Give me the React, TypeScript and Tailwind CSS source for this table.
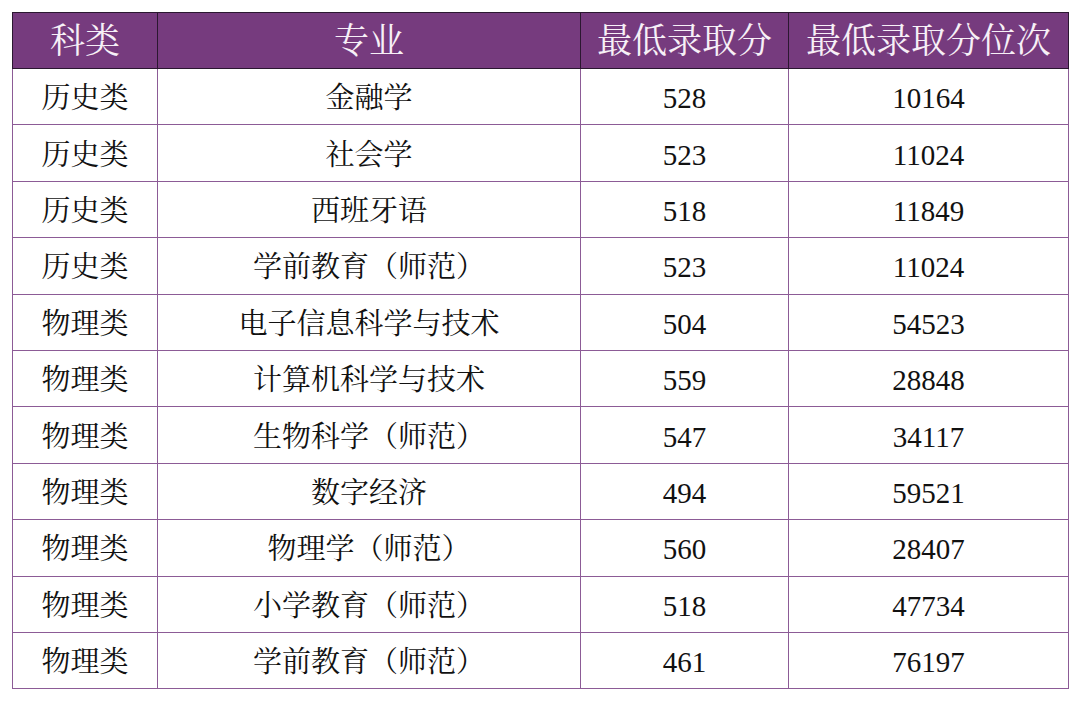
import React from "react";

const rows: [string, string, string, string][] = [
  ["历史类", "金融学", "528", "10164"],
  ["历史类", "社会学", "523", "11024"],
  ["历史类", "西班牙语", "518", "11849"],
  ["历史类", "学前教育（师范）", "523", "11024"],
  ["物理类", "电子信息科学与技术", "504", "54523"],
  ["物理类", "计算机科学与技术", "559", "28848"],
  ["物理类", "生物科学（师范）", "547", "34117"],
  ["物理类", "数字经济", "494", "59521"],
  ["物理类", "物理学（师范）", "560", "28407"],
  ["物理类", "小学教育（师范）", "518", "47734"],
  ["物理类", "学前教育（师范）", "461", "76197"],
];

const headers = ["科类", "专业", "最低录取分", "最低录取分位次"];

export default function App() {
  return (
    <div className="h-[702px] w-[1080px] bg-white pl-[12px] pt-[12px] [font-family:'Liberation_Serif','Noto_Serif_CJK_SC','Noto_Sans_CJK_SC',serif]">
      <table className="w-[1056px] table-fixed border-collapse">
        <colgroup>
          <col className="w-[145px]" />
          <col className="w-[423px]" />
          <col className="w-[208px]" />
          <col className="w-[280px]" />
        </colgroup>
        <thead>
          <tr className="h-[56px] bg-[#763b7e]">
            {headers.map((h) => (
              <th
                key={h}
                className="border-[1.5px] border-[#2b1730] p-0 pt-[2px] text-center text-[35px] font-normal leading-none text-[#f7f0f7]"
              >
                {h}
              </th>
            ))}
          </tr>
        </thead>
        <tbody className="text-[29px] leading-none text-[#111]">
          {rows.map((r, i) => (
            <tr key={i} className="h-[56.4px]">
              {r.map((c, j) => (
                <td
                  key={j}
                  className="border-[1.5px] border-[#8c5b96] p-0 pt-[4px] text-center"
                >
                  {c}
                </td>
              ))}
            </tr>
          ))}
        </tbody>
      </table>
    </div>
  );
}
